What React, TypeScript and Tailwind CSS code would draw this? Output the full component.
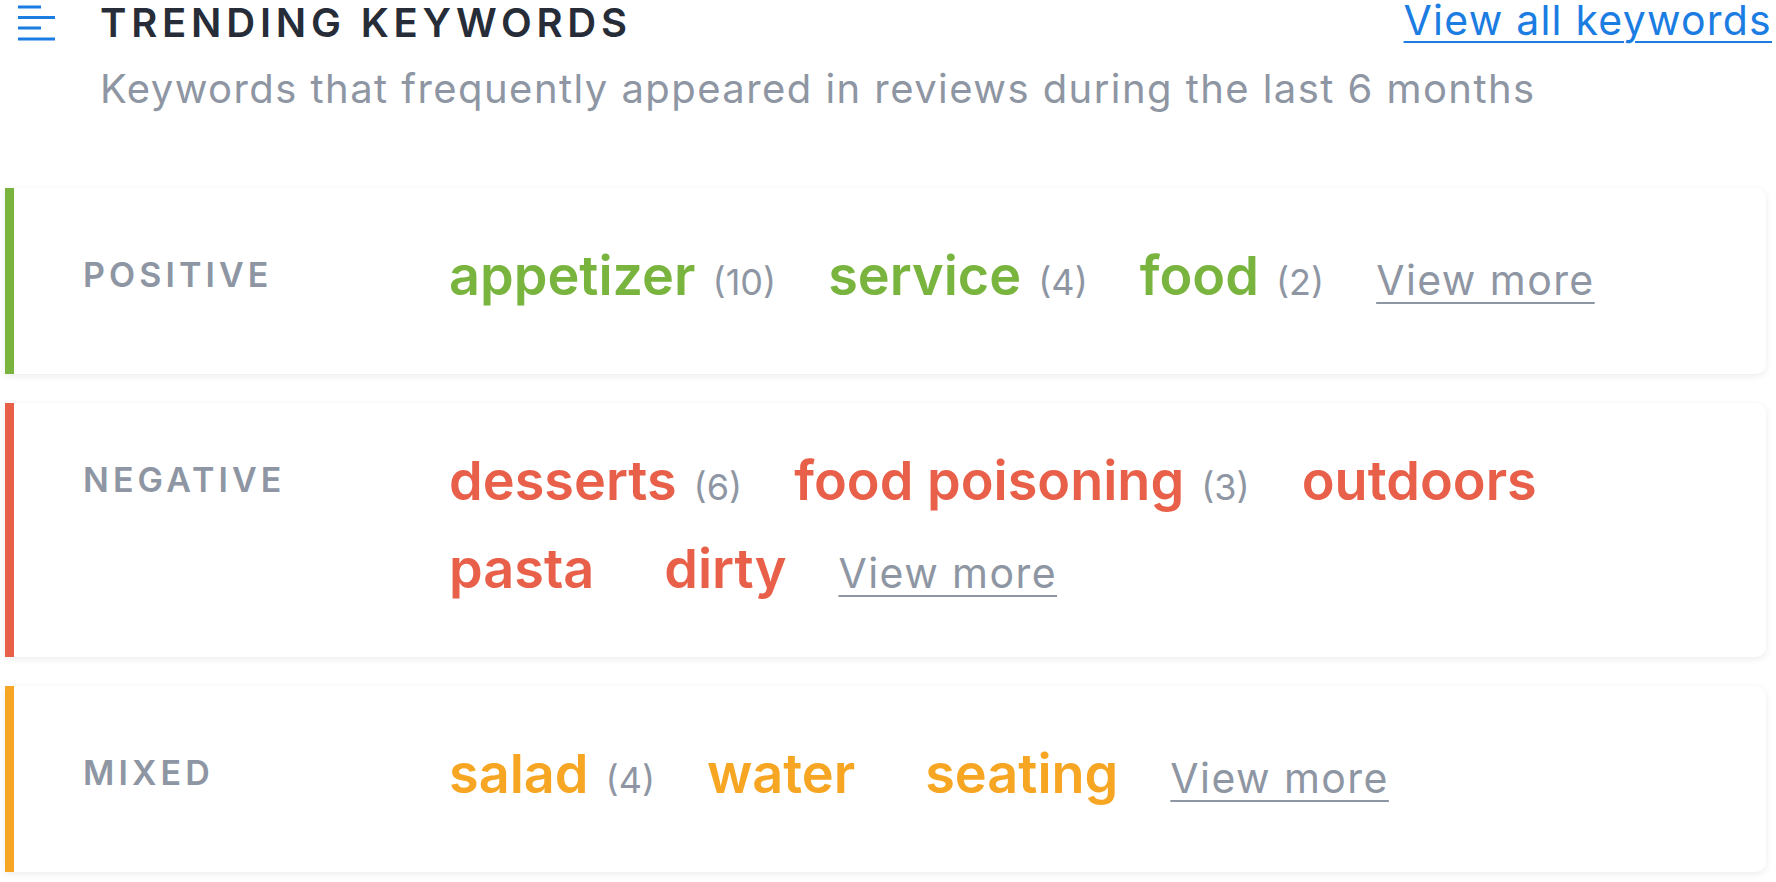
import React from 'react'

type Group = {
    label: string
    bar: string
    text: string
    items: [string, number | null][]
}

const groups: Group[] = [
    {
        label: 'POSITIVE',
        bar: 'border-[#79b43f]',
        text: 'text-[#79b43f]',
        items: [
            ['appetizer', 10],
            ['service', 4],
            ['food', 2],
        ],
    },
    {
        label: 'NEGATIVE',
        bar: 'border-[#e9604a]',
        text: 'text-[#e9604a]',
        items: [
            ['desserts', 6],
            ['food poisoning', 3],
            ['outdoors', null],
            ['pasta', null],
            ['dirty', null],
        ],
    },
    {
        label: 'MIXED',
        bar: 'border-[#f6a623]',
        text: 'text-[#f6a623]',
        items: [
            ['salad', 4],
            ['water', null],
            ['seating', null],
        ],
    },
]

export default function App() {
    return (
        <div className="min-h-screen bg-white pl-[5px] pr-[10px] font-['Inter',sans-serif]">
            {/* Header */}
            <div className="flex items-start justify-between pl-[13px]">
                <div className="flex items-start gap-[45px]">
                    <MenuIcon />
                    <h1 className="text-[40px] font-semibold leading-[46px] tracking-[0.12em] text-[#272d38]">
                        TRENDING KEYWORDS
                    </h1>
                </div>
                <a
                    href="#"
                    className="-mr-[6px] text-[41px] leading-[40px] tracking-[0.03em] text-[#1b7de2] underline decoration-[2px] underline-offset-[6px]"
                >
                    View all keywords
                </a>
            </div>
            <p className="mt-[20px] pl-[95px] text-[40px] leading-[46px] tracking-[0.036em] text-[#8e96a3]">
                Keywords that frequently appeared in reviews during the last 6 months
            </p>

            {/* Keyword groups */}
            <div className="mt-[76px] flex flex-col gap-[29px]">
                {groups.map((g) => (
                    <KeywordCard key={g.label} group={g} />
                ))}
            </div>
        </div>
    )
}

function MenuIcon() {
    return (
        <svg width="37" height="42" viewBox="0 0 37 42" className="shrink-0">
            <rect x="0" y="5.5" width="23" height="3" fill="#1b7de2" />
            <rect x="0" y="16" width="37" height="3" fill="#1b7de2" />
            <rect x="0" y="26.5" width="23" height="3" fill="#1b7de2" />
            <rect x="0" y="37.5" width="37" height="3" fill="#1b7de2" />
        </svg>
    )
}

function KeywordCard({ group }: { group: Group }) {
    const last = group.items.length - 1
    return (
        <div
            className={`flex min-h-[186px] items-center rounded-r-[10px] border-l-[9px] bg-white pt-[34px] pb-[44px] pl-[69px] pr-[90px] shadow-[0_2px_7px_rgba(30,40,60,0.09)] ${group.bar}`}
        >
            <div className="flex flex-1 items-start">
                <div className="mt-[23px] w-[366px] shrink-0 text-[34px] font-semibold leading-[40px] tracking-[0.12em] text-[#8e96a3]">
                    {group.label}
                </div>
                <div className="flex flex-1 flex-wrap items-baseline">
                    {group.items.map(([word, count], i) => (
                        <span
                            key={word}
                            className={`flex items-baseline ${count === null && i < last ? 'mr-[70px]' : 'mr-[52px]'}`}
                        >
                            <span className={`text-[54px] font-semibold leading-[88px] ${group.text}`}>{word}</span>
                            {count !== null && (
                                <span className="ml-[17px] text-[36px] text-[#8e96a3]">({count})</span>
                            )}
                        </span>
                    ))}
                    <a
                        href="#"
                        className="text-[41px] tracking-[0.035em] text-[#8e96a3] underline decoration-[2px] underline-offset-[7px]"
                    >
                        View more
                    </a>
                </div>
            </div>
        </div>
    )
}
